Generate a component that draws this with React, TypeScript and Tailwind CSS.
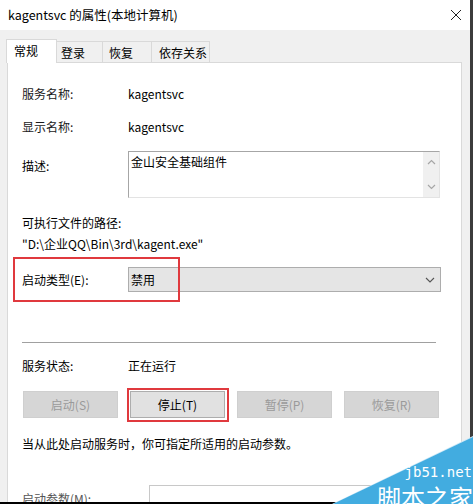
import React from "react";

function Tab({ label, selected, pl, w }: { label: string; selected?: boolean; pl: string; w: string }) {
  if (selected) {
    return (
      <div className={`relative z-10 h-[24px] ${w} ${pl} bg-white border-l border-t border-r border-[#d9d9d9] flex items-center`}>
        <span className="-mt-[1px]">{label}</span>
      </div>
    );
  }
  return (
    <div className={`h-[22px] ${w} ${pl} bg-[#f0f0f0] border-t border-r border-[#d9d9d9] flex items-center`}>
      <span>{label}</span>
    </div>
  );
}

function Btn({ label, disabled }: { label: string; disabled?: boolean }) {
  return (
    <div
      className={`w-[95px] h-[27px] flex items-center justify-center border ${
        disabled ? "bg-[#d6d6d6] border-[#cfcfcf] text-[#9a9a9a]" : "bg-[#e1e1e1] border-[#adadad] text-black"
      }`}
    >
      {label}
    </div>
  );
}

export default function App() {
  return (
    <div className="relative w-[473px] h-[504px] overflow-hidden flex flex-col bg-[#f0f0f0] text-[12px] leading-[16px] text-black font-['Noto_Sans_CJK_SC','Noto_Sans',sans-serif]">
      <div className="flex-1 flex flex-row min-h-0">
        <div className="w-[470px] flex flex-col min-h-0">
          {/* title bar */}
          <div className="h-[30px] bg-white flex items-center justify-between pl-[8px] pr-[8px] shrink-0">
            <span className="text-[12.5px]">kagentsvc 的属性(本地计算机)</span>
            <svg width="12" height="12" viewBox="0 0 12 12" className="-mt-[1px]">
              <path d="M1 1 L11 11 M11 1 L1 11" stroke="#222" strokeWidth="1" />
            </svg>
          </div>
          {/* body */}
          <div className="flex-1 flex flex-col pl-[6px] pr-[8px] pt-[9px] min-h-0">
            <div className="flex flex-row items-end h-[24px] -mb-[1px] shrink-0">
              <Tab label="常规" selected pl="pl-[7px]" w="w-[51px]" />
              <Tab label="登录" pl="pl-[4px]" w="w-[46px]" />
              <Tab label="恢复" pl="pl-[6px]" w="w-[49px]" />
              <Tab label="依存关系" pl="pl-[7px]" w="w-[58px]" />
            </div>
            <div className="ml-[1px] flex-1 bg-white border border-[#d9d9d9] pl-[14px] flex flex-col">
              <div className="mt-[21px] h-[20px] flex items-center">
                <span className="w-[106px] text-[#1a1a1a]">服务名称:</span>
                <span>kagentsvc</span>
              </div>
              <div className="mt-[13px] h-[20px] flex items-center">
                <span className="w-[106px] text-[#1a1a1a]">显示名称:</span>
                <span>kagentsvc</span>
              </div>
              <div className="mt-[14px] flex items-start">
                <span className="w-[106px] pt-[7px]">描述:</span>
                <div className="relative w-[312px] h-[47px] border border-[#a6a6a6] border-b-[#e3e3e3] border-r-[#e3e3e3] pl-[2px] pt-[2px]">
                  <span>金山安全基础组件</span>
                  <div className="absolute right-0 top-0 w-[16px] h-full bg-[#f0f0f0] flex flex-col items-center justify-between py-[7px]">
                    <svg width="9" height="6" viewBox="0 0 9 6">
                      <path d="M1 5 L4.5 1.5 L8 5" stroke="#a6a6a6" strokeWidth="1.2" fill="none" />
                    </svg>
                    <svg width="9" height="6" viewBox="0 0 9 6">
                      <path d="M1 1 L4.5 4.5 L8 1" stroke="#a6a6a6" strokeWidth="1.2" fill="none" />
                    </svg>
                  </div>
                </div>
              </div>
              <div className="mt-[17px]">可执行文件的路径:</div>
              <div className="mt-[5px]">"D:\企业QQ\Bin\3rd\kagent.exe"</div>
              <div className="relative mt-[15px] h-[25px] flex items-center">
                <span className="w-[106px]">启动类型(E):</span>
                <div className="w-[313px] h-[25px] bg-[#e5e5e5] border border-[#adadad] flex items-center justify-between pl-[2px] pr-[5px]">
                  <span>禁用</span>
                  <svg width="10" height="6" viewBox="0 0 10 6">
                    <path d="M1 1 L5 5 L9 1" stroke="#555" strokeWidth="1.1" fill="none" />
                  </svg>
                </div>
                <div className="absolute left-[-9px] top-[-10px] w-[167px] h-[45px] border-2 border-[#e0393e]" />
              </div>
              <div className="mt-[50px] h-px w-[414px] bg-[#a0a0a0]" />
              <div className="mt-[15px] flex items-center">
                <span className="w-[106px]">服务状态:</span>
                <span>正在运行</span>
              </div>
              <div className="mt-[17px] ml-[1px] flex flex-row gap-[12px]">
                <Btn label="启动(S)" disabled />
                <div className="relative">
                  <Btn label="停止(T)" />
                  <div className="absolute left-[-3px] top-[-3px] w-[102px] h-[34px] border-2 border-[#e0393e]" />
                </div>
                <Btn label="暂停(P)" disabled />
                <Btn label="恢复(R)" disabled />
              </div>
              <div className="mt-[18px]">当从此处启动服务时，你可指定所适用的启动参数。</div>
              <div className="mt-[33px] flex items-start">
                <span className="w-[127px] pt-[6px] text-[#555]">启动参数(M):</span>
                <div className="w-[291px] h-[23px] border border-[#c8c8c8]" />
              </div>
            </div>
          </div>
        </div>
        <div className="w-[3px] bg-[#3c3c3c]" />
      </div>
      <div className="h-[2px] bg-black shrink-0" />

      {/* watermark */}
      <div className="absolute right-0 bottom-0 w-[141px] h-[68px] bg-[#cfe9f7] [clip-path:polygon(0_100%,100%_0,100%_100%)]" />
      <div className="absolute right-0 bottom-0 w-[140px] h-[67px] bg-[#42ace0] [clip-path:polygon(0_100%,100%_0,100%_100%)]" />
      <div className="absolute right-[1px] bottom-[25px] text-white text-[14px] leading-[14px] font-['DejaVu_Sans_Mono',monospace]">
        jb51.net
      </div>
      <div className="absolute right-0 bottom-[-7px] text-white text-[24px] leading-[29px] font-['Noto_Sans_CJK_SC',sans-serif]">
        脚本之家
      </div>
    </div>
  );
}
